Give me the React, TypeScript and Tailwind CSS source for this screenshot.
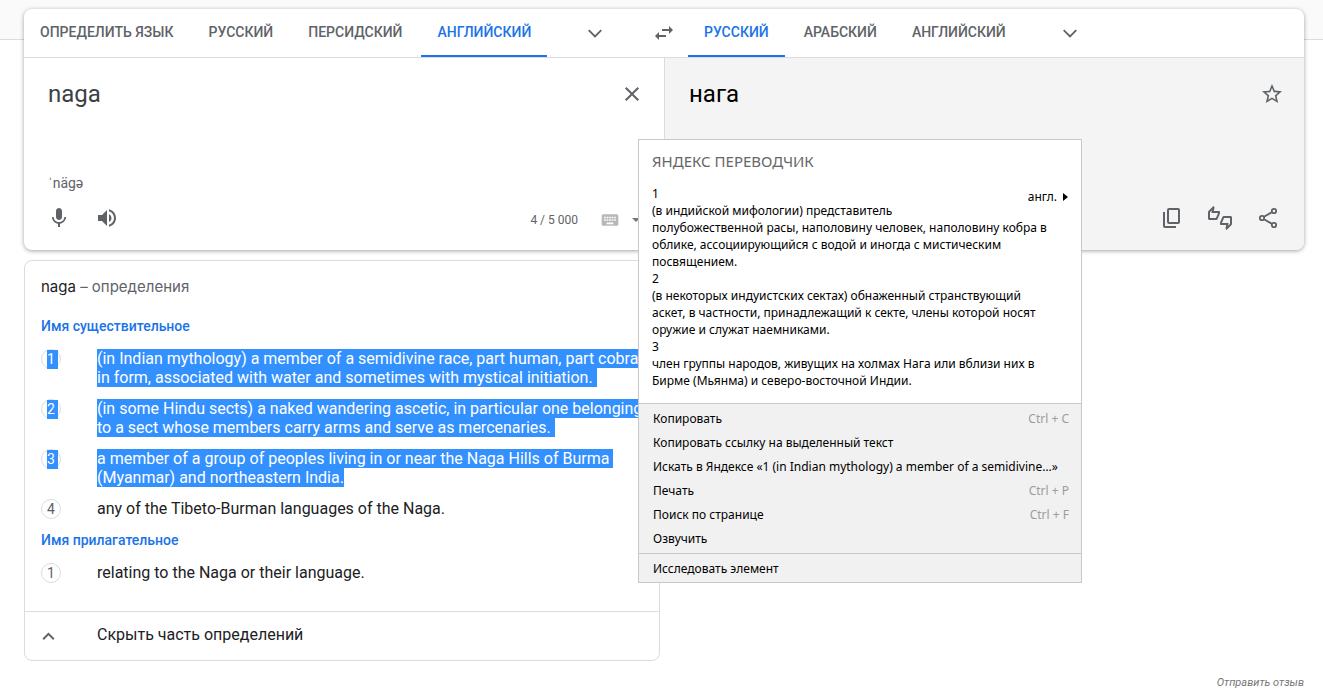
import type { ReactNode } from "react";
import {
  MdClose,
  MdKeyboard,
  MdMic,
  MdOutlineThumbsUpDown,
  MdStarBorder,
  MdSwapHoriz,
  MdVolumeUp,
} from "react-icons/md";

const sourceTabs = ["ОПРЕДЕЛИТЬ ЯЗЫК", "РУССКИЙ", "ПЕРСИДСКИЙ", "АНГЛИЙСКИЙ"];
const targetTabs = ["РУССКИЙ", "АРАБСКИЙ", "АНГЛИЙСКИЙ"];

const nounDefinitions = [
  {
    selected: true,
    lines: [
      "(in Indian mythology) a member of a semidivine race, part human, part cobra",
      "in form, associated with water and sometimes with mystical initiation.",
    ],
  },
  {
    selected: true,
    lines: [
      "(in some Hindu sects) a naked wandering ascetic, in particular one belonging",
      "to a sect whose members carry arms and serve as mercenaries.",
    ],
  },
  {
    selected: true,
    lines: [
      "a member of a group of peoples living in or near the Naga Hills of Burma",
      "(Myanmar) and northeastern India.",
    ],
  },
  { selected: false, lines: ["any of the Tibeto-Burman languages of the Naga."] },
];

const adjectiveDefinitions = [
  { selected: false, lines: ["relating to the Naga or their language."] },
];

const translationLines = [
  "1",
  "(в индийской мифологии) представитель",
  "полубожественной расы, наполовину человек, наполовину кобра в",
  "облике, ассоциирующийся с водой и иногда с мистическим",
  "посвящением.",
  "2",
  "(в некоторых индуистских сектах) обнаженный странствующий",
  "аскет, в частности, принадлежащий к секте, члены которой носят",
  "оружие и служат наемниками.",
  "3",
  "член группы народов, живущих на холмах Нага или вблизи них в",
  "Бирме (Мьянма) и северо-восточной Индии.",
];

const menuItems = [
  { label: "Копировать", shortcut: "Ctrl + C" },
  { label: "Копировать ссылку на выделенный текст" },
  { label: "Искать в Яндексе «1 (in Indian mythology) a member of a semidivine…»" },
  { label: "Печать", shortcut: "Ctrl + P" },
  { label: "Поиск по странице", shortcut: "Ctrl + F" },
  { label: "Озвучить" },
];

function IconButton({ label, children }: { label: string; children: ReactNode }) {
  return (
    <button type="button" aria-label={label} className="flex size-12 items-center justify-center text-[#5f6368]">
      {children}
    </button>
  );
}

function ChevronDown() {
  return (
    <svg width="24" height="24" viewBox="0 0 24 24" fill="none" stroke="currentColor" strokeWidth="1.8" aria-hidden="true">
      <path d="M5.7 9.2 12 15.5l6.3-6.3" />
    </svg>
  );
}

function CopyIcon() {
  return (
    <svg width="24" height="24" viewBox="0 0 24 24" fill="none" stroke="currentColor" strokeWidth="2" aria-hidden="true">
      <rect x="8" y="3" width="11" height="14" rx="1" />
      <path d="M4 6v14a1 1 0 0 0 1 1h11" />
    </svg>
  );
}

function ShareIcon() {
  return (
    <svg width="24" height="24" viewBox="0 0 24 24" fill="none" stroke="currentColor" strokeWidth="1.8" aria-hidden="true">
      <circle cx="18" cy="5" r="2.2" />
      <circle cx="6" cy="12" r="2.2" />
      <circle cx="18" cy="19" r="2.2" />
      <path d="m8 10.8 8-4.7M8 13.2l8 4.7" />
    </svg>
  );
}

function LanguageTabs({ tabs, active }: { tabs: string[]; active: string }) {
  return (
    <div className="flex h-12">
      <div className="flex gap-[3px]">
        {tabs.map((tab) => (
          <button
            key={tab}
            type="button"
            className={
              tab === active
                ? "border-b-2 border-[#1a73e8] px-4 text-sm font-medium whitespace-nowrap text-[#1a73e8]"
                : "border-b-2 border-transparent px-4 text-sm font-medium whitespace-nowrap text-[#5f6368]"
            }
          >
            {tab}
          </button>
        ))}
      </div>
      <div className="pl-6">
        <IconButton label="Другие языки">
          <ChevronDown />
        </IconButton>
      </div>
    </div>
  );
}

type Definition = { selected: boolean; lines: string[] };

function DefinitionList({ items }: { items: Definition[] }) {
  return (
    <ol className="flex flex-col gap-3">
      {items.map((item, index) => (
        <li key={item.lines[0]} className="flex">
          <div className="w-14 shrink-0">
            <span className="flex size-5 items-center rounded-full border border-[#dadce0] pl-[5px] text-sm leading-[19px] text-[#5f6368]">
              {item.selected ? (
                <span className="bg-[#3390ff] pr-[3px] text-white">{index + 1}</span>
              ) : (
                index + 1
              )}
            </span>
          </div>
          <div className="text-base leading-[19px] whitespace-nowrap text-[#202124]">
            {item.lines.map((line, lineIndex) => (
              <p key={line}>
                {item.selected ? (
                  <span className="inline-block bg-[#3390ff] align-top text-white">
                    {line}
                    {index === 2 && lineIndex === 1 ? "" : "\u00a0"}
                  </span>
                ) : (
                  line
                )}
              </p>
            ))}
          </div>
        </li>
      ))}
    </ol>
  );
}

function ContextMenu() {
  return (
    <div className="absolute top-[139px] left-[638px] w-[444px] border border-[#c8c8c8] bg-[#f1f1f1] font-['Noto_Sans','Open_Sans',sans-serif] text-xs text-black">
      <section className="border-b border-[#c8c8c8] bg-white px-[13px] pt-[11px] pb-[14px]">
        <h2 className="text-[15px] leading-5 text-[#666]">ЯНДЕКС ПЕРЕВОДЧИК</h2>
        <div className="mt-[14px] flex items-start justify-between">
          <div className="w-0 leading-[17px] whitespace-nowrap">
            {translationLines.map((line) => (
              <p key={line}>{line}</p>
            ))}
          </div>
          <button type="button" className="flex items-center gap-[6px] leading-6">
            англ.
            <svg width="5" height="8" viewBox="0 0 5 8" aria-hidden="true">
              <path d="M0 0l5 4-5 4z" fill="currentColor" />
            </svg>
          </button>
        </div>
      </section>
      <div className="border-b border-[#c8c8c8] pt-[3px] pb-[2px]">
        {menuItems.map((item) => (
          <button
            key={item.label}
            type="button"
            className="flex h-6 w-full items-center justify-between pr-3 pl-[14px] whitespace-nowrap"
          >
            <span>{item.label}</span>
            {item.shortcut && <span className="text-[#9d9d9d]">{item.shortcut}</span>}
          </button>
        ))}
      </div>
      <div className="pt-[3px] pb-px">
        <button type="button" className="flex h-6 w-full items-center px-[14px]">
          Исследовать элемент
        </button>
      </div>
    </div>
  );
}

export default function App() {
  return (
    <div className="relative min-h-screen bg-white font-[Roboto,sans-serif]">
      <header className="h-10 border-b border-[#dcdcdc] bg-[#fafafa]" />
      <main className="relative -mt-[31px] pr-[19px] pl-6">
        <section className="overflow-hidden rounded-lg bg-white shadow-[0_1px_4px_rgba(0,0,0,0.37)]">
          <div className="grid grid-cols-2 border-b border-[#dcdcdc]">
            <LanguageTabs tabs={sourceTabs} active="АНГЛИЙСКИЙ" />
            <div className="-ml-6 flex">
              <IconButton label="Поменять языки местами">
                <MdSwapHoriz size={24} />
              </IconButton>
              <LanguageTabs tabs={targetTabs} active="РУССКИЙ" />
            </div>
          </div>
          <div className="grid grid-cols-2">
            <div className="flex h-48 flex-col justify-between">
              <div className="flex items-start pt-3 pr-2">
                <textarea
                  aria-label="Исходный текст"
                  defaultValue="naga"
                  rows={2}
                  className="h-20 flex-1 resize-none pt-2 pl-6 text-2xl leading-8 text-[#3c4043] outline-none"
                />
                <IconButton label="Удалить исходный текст">
                  <MdClose size={24} />
                </IconButton>
              </div>
              <div>
                <p className="mb-px px-6 text-sm leading-5 text-[#5f6368]">ˈnägə</p>
                <div className="flex items-center pb-2 pl-[11px]">
                  <IconButton label="Голосовой ввод">
                    <MdMic size={24} />
                  </IconButton>
                  <IconButton label="Прослушать">
                    <MdVolumeUp size={24} />
                  </IconButton>
                  <div className="ml-auto flex items-center pt-1 pr-6">
                    <span className="pr-[22px] text-xs text-[#5f6368]">4 / 5&nbsp;000</span>
                    <button type="button" aria-label="Экранная клавиатура" className="flex items-center gap-3 text-[#b8b8b8]">
                      <MdKeyboard size={20} />
                      <svg width="8" height="4" viewBox="0 0 8 4" aria-hidden="true">
                        <path d="M0 0h8L4 4z" fill="#777" />
                      </svg>
                    </button>
                  </div>
                </div>
              </div>
            </div>
            <div className="flex h-48 flex-col justify-between border-l border-[#dcdcdc] bg-[#f4f4f4]">
              <div className="flex items-start justify-between pt-3 pr-2 pl-6">
                <p className="pt-2 text-2xl leading-8 text-black">нага</p>
                <IconButton label="Сохранить перевод">
                  <MdStarBorder size={24} />
                </IconButton>
              </div>
              <div className="flex justify-end pr-3 pb-2">
                <IconButton label="Копировать перевод">
                  <CopyIcon />
                </IconButton>
                <IconButton label="Оценить перевод">
                  <MdOutlineThumbsUpDown size={24} />
                </IconButton>
                <IconButton label="Поделиться переводом">
                  <ShareIcon />
                </IconButton>
              </div>
            </div>
          </div>
        </section>

        <div className="mt-[10px] grid grid-cols-2 gap-2">
          <section className="rounded-lg border border-[#dadce0]">
            <div className="px-4 pt-4 pb-7">
              <h2 className="font-[Inter,sans-serif] text-[15px] leading-5 text-[#5f6368]">
                <span className="text-[#202124]">naga</span> – определения
              </h2>
              <h3 className="mt-[19px] mb-[13px] text-sm leading-5 font-medium text-[#1a73e8]">Имя существительное</h3>
              <DefinitionList items={nounDefinitions} />
              <h3 className="mt-[11px] mb-[13px] text-sm leading-5 font-medium text-[#1a73e8]">Имя прилагательное</h3>
              <DefinitionList items={adjectiveDefinitions} />
            </div>
            <button
              type="button"
              className="flex h-[49px] w-full items-center border-t border-[#dadce0] px-4 pb-[2px] text-left text-base text-[#202124]"
            >
              <span className="w-14 text-[#5f6368]">
                <svg width="16" height="16" viewBox="0 0 16 16" fill="none" stroke="currentColor" strokeWidth="2" aria-hidden="true">
                  <path d="M2.2 12.2 7.5 6.9l5.3 5.3" />
                </svg>
              </span>
              Скрыть часть определений
            </button>
          </section>
        </div>
      </main>
      <footer className="flex justify-end pt-[14px] pr-[19px]">
        <a href="#feedback" className="text-[11px] leading-4 text-[#777] italic">
          Отправить отзыв
        </a>
      </footer>
      <ContextMenu />
    </div>
  );
}
